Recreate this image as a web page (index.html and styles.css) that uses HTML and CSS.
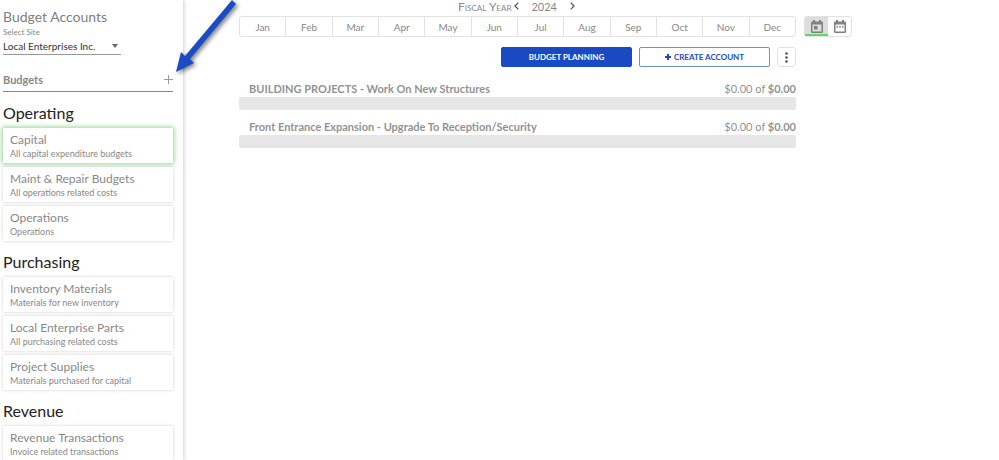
FILE: index.html
```html
<!DOCTYPE html>
<html lang="en">
<head>
<meta charset="utf-8">
<title>Budget Accounts</title>
<link rel="stylesheet" href="styles.css">
</head>
<body>
<div class="app">
  <aside class="sidebar">
    <h1 class="title">Budget Accounts</h1>
    <label class="site-label" for="site">Select Site</label>
    <div class="site-field">
      <select id="site" class="site-select"><option>Local Enterprises Inc.</option></select>
      <svg class="caret" viewBox="0 0 6 4" aria-hidden="true"><path d="M0 0h6L3 4z"/></svg>
    </div>
    <div class="budgets-bar">
      <span>Budgets</span>
      <button class="add" aria-label="Add budget"><svg viewBox="0 0 9 9"><path d="M4.500 0v9M0 4.500h9"/></svg></button>
    </div>
    <h2 class="group">Operating</h2>
    <div class="cards">
      <a class="card active" href="#"><span class="card-name">Capital</span><span class="card-note">All capital expenditure budgets</span></a>
      <a class="card" href="#"><span class="card-name">Maint &amp; Repair Budgets</span><span class="card-note">All operations related costs</span></a>
      <a class="card" href="#"><span class="card-name">Operations</span><span class="card-note">Operations</span></a>
    </div>
    <h2 class="group">Purchasing</h2>
    <div class="cards">
      <a class="card" href="#"><span class="card-name">Inventory Materials</span><span class="card-note">Materials for new inventory</span></a>
      <a class="card" href="#"><span class="card-name">Local Enterprise Parts</span><span class="card-note">All purchasing related costs</span></a>
      <a class="card" href="#"><span class="card-name">Project Supplies</span><span class="card-note">Materials purchased for capital</span></a>
    </div>
    <h2 class="group">Revenue</h2>
    <div class="cards">
      <a class="card" href="#"><span class="card-name">Revenue Transactions</span><span class="card-note">Invoice related transactions</span></a>
    </div>
  </aside>

  <main class="main">
    <div class="year">
      <span class="year-label">Fiscal Year</span>
      <button class="step" aria-label="Previous year"><svg viewBox="0 0 5 8"><path d="M4.300.6L1 4l3.300 3.400"/></svg></button>
      <span class="year-value">2024</span>
      <button class="step" aria-label="Next year"><svg viewBox="0 0 5 8"><path d="M.7.600L4 4 .7 7.400"/></svg></button>
    </div>
    <div class="period">
      <div class="months">
        <button>Jan</button><button>Feb</button><button>Mar</button><button>Apr</button><button>May</button><button>Jun</button><button>Jul</button><button>Aug</button><button>Sep</button><button>Oct</button><button>Nov</button><button>Dec</button>
      </div>
      <div class="views">
        <button class="on" aria-label="Month view"><svg viewBox="0 0 12 13"><path fill-rule="evenodd" d="M2 0h2v1.500h4V0h2v1.500h.7Q12 1.500 12 2.800v8.900Q12 13 10.700 13H1.300Q0 13 0 11.700V2.800Q0 1.500 1.300 1.500H2zM1.500 4.500v7h9v-7zM3 6h3.500v3.500H3z"/></svg></button>
        <button aria-label="Year view"><svg viewBox="0 0 12 13"><path fill-rule="evenodd" d="M2 0h2v1.500h4V0h2v1.500h.7Q12 1.500 12 2.800v8.900Q12 13 10.700 13H1.300Q0 13 0 11.700V2.800Q0 1.500 1.300 1.500H2zM1.500 4.500v7h9v-7zM2.500 6H4v1.500H2.500zM5.200 6h1.600v1.500H5.200zM8 6h1.500v1.500H8z"/></svg></button>
      </div>
    </div>
    <div class="actions">
      <button class="btn primary">BUDGET PLANNING</button>
      <button class="btn outline"><svg viewBox="0 0 6 6" aria-hidden="true"><path d="M3 0v6M0 3h6"/></svg>CREATE ACCOUNT</button>
      <button class="more" aria-label="More actions"><svg viewBox="0 0 3 11"><circle cx="1.500" cy="1.500" r="1.300"/><circle cx="1.500" cy="5.500" r="1.300"/><circle cx="1.500" cy="9.500" r="1.300"/></svg></button>
    </div>
    <section class="account">
      <div class="account-head"><h3>BUILDING PROJECTS - Work On New Structures</h3><span>$0.00 of <b>$0.00</b></span></div>
      <div class="bar"></div>
    </section>
    <section class="account">
      <div class="account-head"><h3>Front Entrance Expansion - Upgrade To Reception/Security</h3><span>$0.00 of <b>$0.00</b></span></div>
      <div class="bar"></div>
    </section>
  </main>
  <svg class="pointer" viewBox="0 0 70 80" aria-hidden="true"><path d="M62 0L66 4 20 59 24 63 6 72 11 52 15 56z"/></svg>
</div>
</body>
</html>
```
FILE: styles.css
```css
* { box-sizing: border-box; }
body {
  margin: 0;
  background: #fff;
  color: #888;
  font-family: Lato, "Liberation Sans", sans-serif;
  font-size: 12px;
}
button {
  padding: 0;
  border: 0;
  background: none;
  color: inherit;
  font: inherit;
}
h1, h2, h3 { margin: 0; font-weight: 400; }
svg { display: block; }
.app {
  position: relative;
  display: flex;
  height: 100vh;
  overflow: hidden;
}

/* Sidebar */
.sidebar {
  flex: 0 0 183px;
  padding: 7px 10px 0 3px;
  box-shadow: 1px 0 4px rgba(0, 0, 0, .2);
}
.title { font-size: 14px; line-height: 19px; color: #808080; }
.site-label {
  display: block;
  font-size: 8px;
  line-height: 12px;
}
.site-field {
  display: flex;
  align-items: center;
  width: 118px;
  height: 17px;
  padding-right: 3px;
  border-bottom: 1px solid #999;
}
.site-select {
  flex: 1;
  min-width: 0;
  padding: 0;
  border: 0;
  appearance: none;
  background: none;
  color: #333;
  font: inherit;
  font-size: 10px;
}
.caret { width: 6px; height: 4px; fill: #666; }
.budgets-bar {
  display: flex;
  align-items: center;
  justify-content: space-between;
  height: 24px;
  margin-top: 13px;
  border-bottom: 1px solid #888;
  font-size: 11px;
  font-weight: 700;
}
.add svg { width: 9px; height: 9px; stroke: #999; fill: none; }
.group {
  font-size: 16px;
  line-height: 20px;
  padding: 11px 0 5px;
  color: #222;
}
.cards { display: grid; gap: 4px; }
.card {
  display: block;
  height: 35px;
  padding: 4px 7px;
  background: #fff;
  box-shadow: 0 0 3px rgba(0, 0, 0, .2);
  color: #888;
  text-decoration: none;
}
.card.active { box-shadow: 0 0 5px 1px #8fd68b; }
.card span { display: block; white-space: nowrap; }
.card-name { font-size: 12px; line-height: 16px; }
.card-note { font-size: 9px; line-height: 12px; }

/* Main area */
.main {
  flex: 1;
  min-width: 0;
  padding: 0 147px 0 56px;
}
.main > * { margin-right: 56px; }
.year {
  display: flex;
  align-items: center;
  justify-content: center;
  height: 12px;
  margin-bottom: 4px;
}
.main > .year { margin-right: 58px; }
.year-label { font-variant: small-caps; }
.year-value { margin: 0 13px 0 12px; font-size: 11px; }
.year-label + .step { margin-left: 3px; }
.step svg { width: 5px; height: 8px; fill: none; stroke: #555; stroke-width: 1.300; }
.main > .period { display: flex; gap: 8px; margin-right: 0; }
.months, .views {
  display: flex;
  height: 21px;
  border: 1px solid #e2e2e2;
  border-radius: 3px;
}
.months { flex: 1; }
.months button {
  flex: 1;
  border-left: 1px solid #e2e2e2;
  font-size: 10px;
}
.months button:first-child { border-left: 0; }
.views { flex: 0 0 48px; }
.views button { flex: 1; display: grid; place-items: center; }
.views svg { width: 12px; height: 13px; fill: #808080; }
.views .on {
  background: #ddd;
  box-shadow: inset 0 -2px #60d960;
}
.actions {
  display: flex;
  justify-content: flex-end;
  gap: 7px;
  margin-top: 10px;
}
.btn {
  display: flex;
  align-items: center;
  justify-content: center;
  gap: 3px;
  width: 131px;
  height: 20px;
  border: 1px solid #1a49c4;
  border-radius: 2px;
  font-size: 8px;
  font-weight: 700;
}
.primary { background: #1a49c4; color: #fff; }
.outline { border-color: #6f8bdd; color: #1a49c4; }
.btn svg { width: 6px; height: 6px; stroke: #1a49c4; stroke-width: 2; }
.more {
  display: grid;
  place-items: center;
  width: 19px;
  height: 20px;
  border: 1px solid #e2e2e2;
  border-radius: 3px;
}
.more svg { width: 3px; height: 11px; fill: #555; }
.account { margin-top: 9px; }
.actions + .account { margin-top: 14px; }
.account-head {
  display: flex;
  justify-content: space-between;
  padding-left: 10px;
  line-height: 16px;
  font-size: 11px;
  color: #929292;
}
.account-head h3 { font-size: 11px; font-weight: 700; line-height: 16px; }
.bar { height: 13px; border-radius: 2px; background: #e6e6e6; }

/* Callout arrow over the page */
.pointer {
  position: absolute;
  top: 0;
  left: 170px;
  width: 70px;
  height: 80px;
  fill: #1b4cc4;
  filter: drop-shadow(2px 2px 2px rgba(0, 0, 0, .5));
}
```
